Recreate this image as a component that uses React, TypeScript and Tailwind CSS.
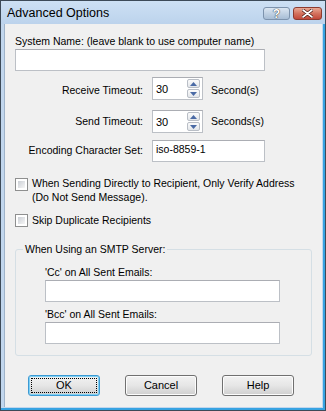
import React from 'react';

const sans = "font-['Liberation_Sans',Arial,sans-serif]";

const TextBox = ({ value = '', className = '' }: { value?: string; className?: string }) => (
  <div className={`h-[22px] bg-white border border-[#bcc0c6] border-t-[#abadb3] px-[3px] pt-[1px] text-[10.5px] leading-[14px] text-black ${className}`}>
    {value}
  </div>
);

const Arrow = ({ up }: { up?: boolean }) => (
  <svg width="7" height="4" viewBox="0 0 7 4">
    <path d={up ? 'M0 4 L3.5 0 L7 4 Z' : 'M0 0 L3.5 4 L7 0 Z'} fill="#4a6aa5" />
  </svg>
);

const Spin = ({ value }: { value: string }) => (
  <div className="w-[51px] h-[23px] bg-white border border-[#bcc0c6] border-t-[#abadb3] flex">
    <div className="flex-1 pl-[3px] pt-[4px] text-[11px] leading-[14px]">{value}</div>
    <div className="w-[13px] mr-[2px] my-[1px] flex flex-col gap-[1px]">
      <div className="flex-1 border border-[#b9bec6] rounded-[2px] bg-gradient-to-b from-[#fbfbfb] to-[#e3e6ea] flex items-center justify-center">
        <Arrow up />
      </div>
      <div className="flex-1 border border-[#b9bec6] rounded-[2px] bg-gradient-to-b from-[#fbfbfb] to-[#e3e6ea] flex items-center justify-center">
        <Arrow />
      </div>
    </div>
  </div>
);

const Check = () => (
  <div className="w-[13px] h-[13px] shrink-0 border border-[#8e8f8f] bg-white p-[2px]">
    <div className="w-full h-full bg-gradient-to-br from-[#cbcfd5] to-[#f6f6f6]" />
  </div>
);

const Btn = ({ label, def }: { label: string; def?: boolean }) => (
  <div
    className={`w-[72px] h-[21px] rounded-[3px] border flex items-center justify-center text-[11px] bg-gradient-to-b from-[#f2f2f2] via-[#e6e6e6] to-[#cfcfcf] ${
      def ? 'border-[#3c9ad4] shadow-[inset_0_0_0_1px_#7fd0f4]' : 'border-[#707070] shadow-[inset_0_0_0_1px_#fcfcfc]'
    }`}
  >
    {def ? (
      <div className="w-[66px] h-[15px] border border-dotted border-black flex items-center justify-center leading-none">{label}</div>
    ) : (
      label
    )}
  </div>
);

export default function App() {
  return (
    <div className={`w-[326px] h-[411px] border border-[#3d4a58] bg-[#c1d6ed] flex flex-col ${sans} text-black`}>
      {/* title bar */}
      <div className="h-[23px] shrink-0 flex items-center pl-[6px] pr-[3px] bg-gradient-to-b from-[#cde0f4] to-[#bcd3ec]">
        <span className="text-[12.5px] leading-none pt-[1px]">Advanced Options</span>
        <div className="ml-auto flex items-center gap-[3px] pt-[2px]">
          <div className="w-[27px] h-[13px] rounded-[3px] border border-[#7d93ad] bg-gradient-to-b from-[#dbe6f2] to-[#a7bdd5] flex items-center justify-center text-[12px] font-bold text-white leading-none [text-shadow:0_0_1px_#333,0_0_1px_#333]">
            ?
          </div>
          <div className="w-[29px] h-[13px] rounded-[3px] border border-[#8c3b30] bg-gradient-to-b from-[#e9a894] via-[#d3725e] to-[#c2483a] flex items-center justify-center">
            <svg width="11" height="9" viewBox="0 0 11 9">
              <path d="M1 1 L10 8 M10 1 L1 8" stroke="#4a1a14" strokeWidth="3.2" strokeLinecap="round" />
              <path d="M1 1 L10 8 M10 1 L1 8" stroke="#ffffff" strokeWidth="1.6" strokeLinecap="round" />
            </svg>
          </div>
        </div>
      </div>

      {/* frame + client */}
      <div className="flex-1 flex pl-[3px] border-r-2 border-b-2 border-[#37a3e2]">
        <div className="flex-1 mb-[1px] mr-[1px] bg-[#f0f0f0] border-l border-[#9fb3c9] pl-[10px] flex flex-col text-[10.5px] leading-[13px]">
          <div className="mt-[11px]">System Name: (leave blank to use computer name)</div>
          <TextBox className="mt-[1px] w-[250px]" />

          <div className="mt-[6px] flex items-start">
            <div className="w-[128px] text-right pt-[7px]">Receive Timeout:</div>
            <div className="ml-[9px]"><Spin value="30" /></div>
            <div className="ml-[8px] pt-[7px]">Second(s)</div>
          </div>

          <div className="mt-[10px] flex items-start">
            <div className="w-[128px] text-right pt-[5px]">Send Timeout:</div>
            <div className="ml-[9px]"><Spin value="30" /></div>
            <div className="ml-[8px] pt-[5px]">Seconds(s)</div>
          </div>

          <div className="mt-[7px] flex items-start">
            <div className="w-[128px] text-right pt-[4px]">Encoding Character Set:</div>
            <TextBox value="iso-8859-1" className="ml-[9px] w-[113px]" />
          </div>

          <div className="mt-[14px] flex items-start gap-[4px]">
            <div className="mt-[2px]"><Check /></div>
            <div className="leading-[14px]">
              When Sending Directly to Recipient, Only Verify Address
              <br />
              (Do Not Send Message).
            </div>
          </div>

          <div className="mt-[9px] flex items-start gap-[4px]">
            <div className="mt-[1px]"><Check /></div>
            <div className="leading-[14px]">Skip Duplicate Recipients</div>
          </div>

          <fieldset className="mt-[16px] w-[297px] h-[113px] border border-[#d5dfe5] rounded-[3px] pl-[29px]">
            <legend className="-ml-[22px] px-[2px] leading-[13px]">When Using an SMTP Server:</legend>
            <div className="mt-[10px]">'Cc' on All Sent Emails:</div>
            <TextBox className="mt-[1px] w-[235px]" />
            <div className="mt-[6px]">'Bcc' on All Sent Emails:</div>
            <TextBox className="mt-[1px] w-[235px]" />
          </fieldset>

          <div className="mt-[19px] ml-[13px] flex gap-[25px]">
            <Btn label="OK" def />
            <Btn label="Cancel" />
            <Btn label="Help" />
          </div>
        </div>
      </div>
    </div>
  );
}
